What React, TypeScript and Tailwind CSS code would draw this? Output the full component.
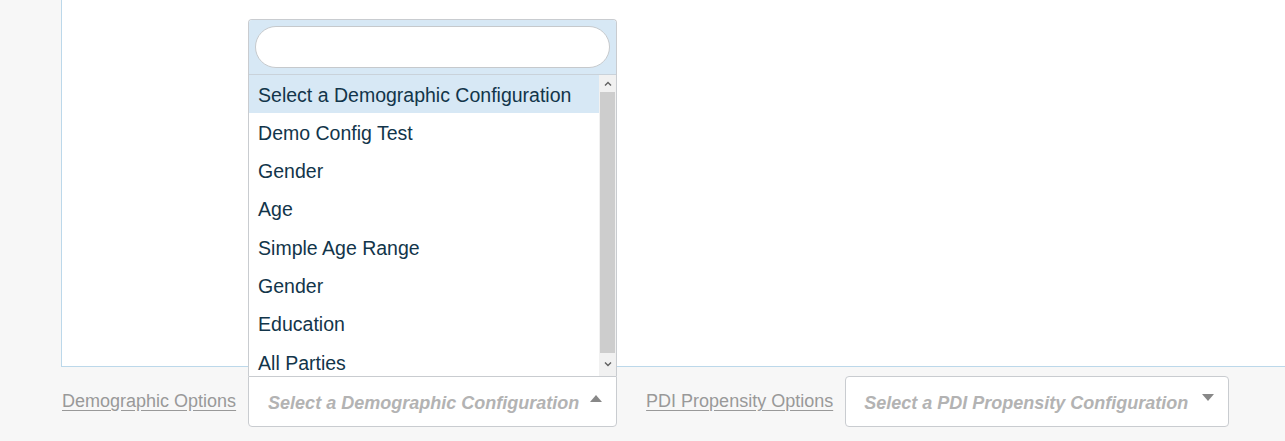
const options = [
  "Select a Demographic Configuration",
  "Demo Config Test",
  "Gender",
  "Age",
  "Simple Age Range",
  "Gender",
  "Education",
  "All Parties",
];

const Caret = ({ up }: { up?: boolean }) => (
  <svg width="12" height="7" viewBox="0 0 12 7" className="shrink-0">
    <path d={up ? "M0 7 L6 0 L12 7 Z" : "M0 0 L6 7 L12 0 Z"} fill="#888888" />
  </svg>
);

const Chevron = ({ up }: { up?: boolean }) => (
  <svg width="8" height="5" viewBox="0 0 8 5">
    <path
      d={up ? "M1 4.5 L4 1.5 L7 4.5" : "M1 0.5 L4 3.5 L7 0.5"}
      fill="none"
      stroke="#606060"
      strokeWidth="1.4"
    />
  </svg>
);

const DemographicDropdown = () => (
  <div className="absolute bottom-full left-0 w-[369px] h-[357px] flex flex-col bg-white border border-[#c9ccd0] border-b-0 rounded-t-[4px] overflow-hidden">
    <div className="h-[55px] shrink-0 bg-[#d7e8f5] border-b border-[#c9d2da] px-[6px] pt-[6px]">
      <input
        type="text"
        className="w-full h-[42px] rounded-full border border-[#c6c9cc] bg-white outline-none px-4"
      />
    </div>
    <div className="flex flex-1 min-h-0">
      <ul className="flex-1 overflow-hidden">
        {options.map((opt, i) => (
          <li
            key={i}
            className={`h-[38.3px] shrink-0 flex items-center pl-[9px] pt-[2px] text-[19.5px] text-[#12354a] ${
              i === 0 ? "bg-[#d7e8f5]" : ""
            }`}
          >
            {opt}
          </li>
        ))}
      </ul>
      <div className="w-[17px] shrink-0 flex flex-col bg-[#f1f1f1]">
        <div className="h-[17px] flex items-center justify-center">
          <Chevron up />
        </div>
        <div className="flex-1 bg-[#cdcdcd] mx-[1px]" />
        <div className="h-[23px] flex items-center justify-center">
          <Chevron />
        </div>
      </div>
    </div>
  </div>
);

export default function App() {
  return (
    <div
      className="w-[1285px] h-[441px] bg-[#f7f7f7] overflow-hidden"
      style={{ fontFamily: '"Liberation Sans", Arial, sans-serif' }}
    >
      <div className="ml-[61px] h-[367px] bg-white border-l border-b border-[#bcd8ea]" />
      <div className="flex items-center pl-[62px] pt-[9px]">
        <span className="text-[18px] text-[#999999] underline underline-offset-[3px]">
          Demographic Options
        </span>
        <div className="relative ml-[12px]">
          <DemographicDropdown />
          <div className="w-[369px] h-[51px] bg-white border border-[#c9ccd0] rounded-b-[4px] flex items-center justify-between pl-[19px] pr-[14px]">
            <span className="text-[18px] font-bold italic text-[#b3b3b3] pt-[3px]">
              Select a Demographic Configuration
            </span>
            <div className="-mt-[6px]">
              <Caret up />
            </div>
          </div>
        </div>
        <span className="ml-[29px] text-[18px] text-[#999999] underline underline-offset-[3px]">
          PDI Propensity Options
        </span>
        <div className="ml-[12px] w-[384px] h-[51px] bg-white border border-[#c9ccd0] rounded-[4px] flex items-center justify-between pl-[18px] pr-[14px]">
          <span className="text-[18px] font-bold italic text-[#b3b3b3] pt-[4px]">
            Select a PDI Propensity Configuration
          </span>
          <div className="-mt-[8px]">
            <Caret />
          </div>
        </div>
      </div>
    </div>
  );
}
